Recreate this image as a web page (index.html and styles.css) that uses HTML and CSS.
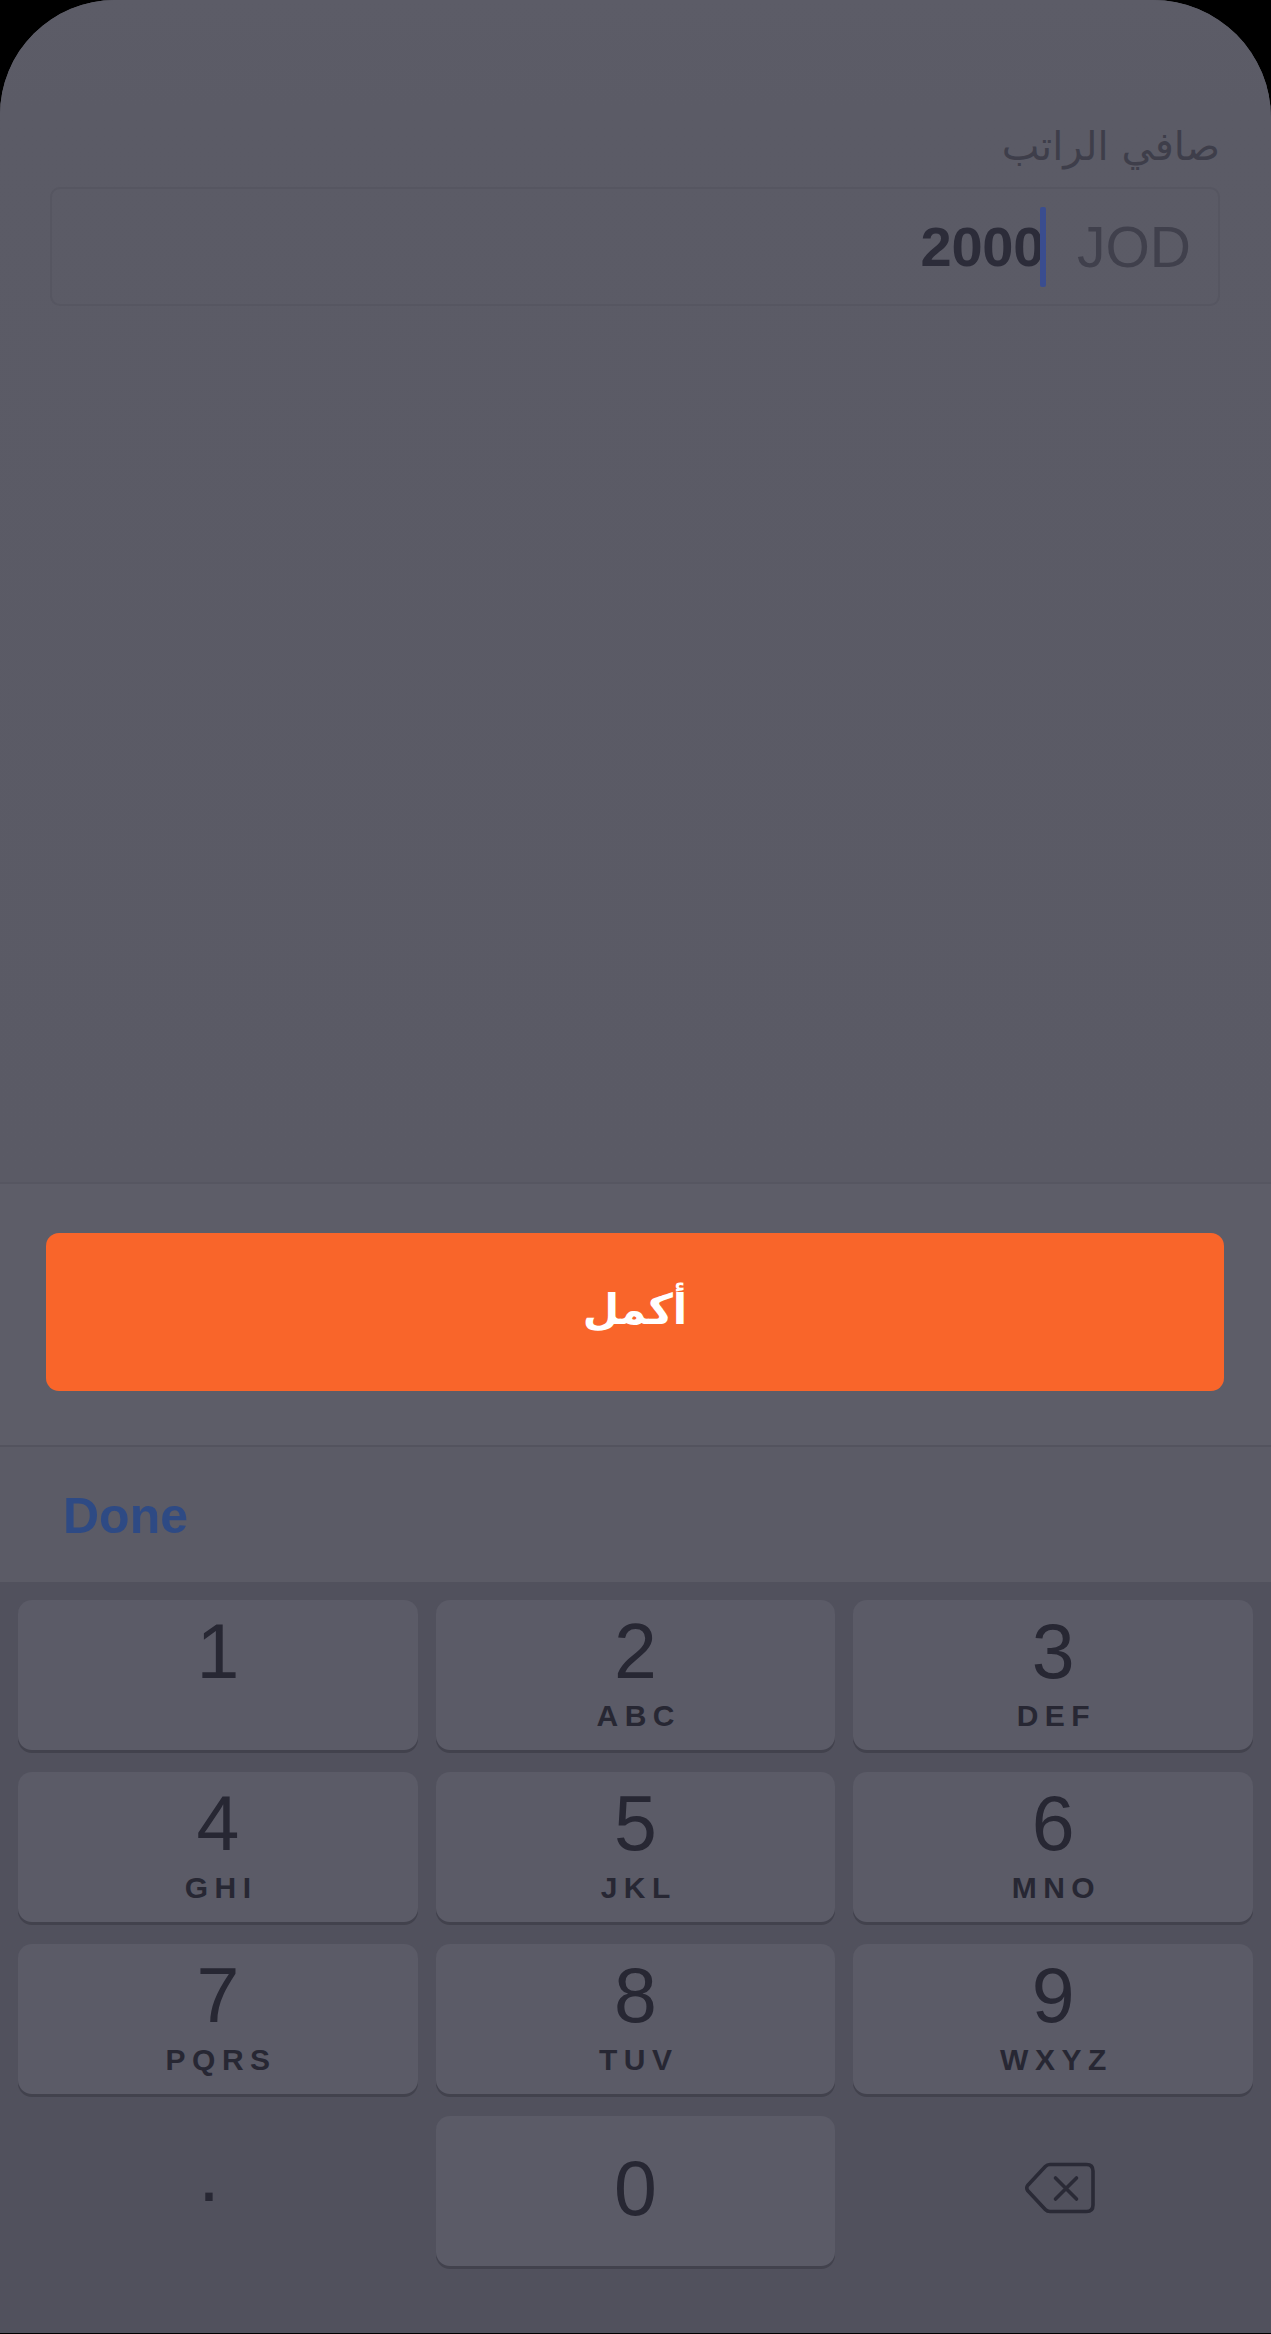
FILE: index.html
```html
<!DOCTYPE html>
<html lang="ar">
<head>
<meta charset="utf-8">
<title>صافي الراتب</title>
<link rel="stylesheet" href="styles.css">
</head>
<body>
<div class="screen">
  <div class="content">
    <div class="field-label" dir="rtl">صافي الراتب</div>
    <div class="amount-input">
      <span class="amount-value">2000</span>
      <span class="caret"></span>
      <span class="currency">JOD</span>
    </div>
  </div>
  <div class="footer-bar">
    <button class="primary-btn" dir="rtl">أكمل</button>
  </div>
  <div class="toolbar">
    <span class="done">Done</span>
  </div>
  <div class="keyboard">
    <div class="key"><span class="digit">1</span><span class="letters"></span></div>
    <div class="key"><span class="digit">2</span><span class="letters">ABC</span></div>
    <div class="key"><span class="digit">3</span><span class="letters">DEF</span></div>
    <div class="key"><span class="digit">4</span><span class="letters">GHI</span></div>
    <div class="key"><span class="digit">5</span><span class="letters">JKL</span></div>
    <div class="key"><span class="digit">6</span><span class="letters">MNO</span></div>
    <div class="key"><span class="digit">7</span><span class="letters">PQRS</span></div>
    <div class="key"><span class="digit">8</span><span class="letters">TUV</span></div>
    <div class="key"><span class="digit">9</span><span class="letters">WXYZ</span></div>
    <div class="key key-plain key-dot"><span class="digit">.</span></div>
    <div class="key key-zero"><span class="digit">0</span></div>
    <div class="key key-plain key-delete">
      <svg class="delete-icon" width="72" height="52" viewBox="0 0 72 52" fill="none" stroke="#2a2a36" stroke-width="3.6" stroke-linecap="round" stroke-linejoin="round">
        <path d="M26 2.5 H62.5 Q69 2.5 69 9 V43 Q69 49.5 62.5 49.5 H26 Q23.2 49.5 21.3 47.5 L3.6 28.6 Q2 26 3.6 23.4 L21.3 4.5 Q23.2 2.5 26 2.5 Z"/>
        <path d="M31.5 16 L52.5 37 M52.5 16 L31.5 37"/>
      </svg>
    </div>
  </div>
</div>
</body>
</html>
```
FILE: styles.css
```css
html, body {
  margin: 0;
  padding: 0;
  background: #000000;
}

.screen {
  width: 1271px;
  height: 2333px;
  background: #5b5b66;
  border-radius: 115px 118px 0 0;
  overflow: hidden;
  display: flex;
  flex-direction: column;
  font-family: "Liberation Sans", Arial, sans-serif;
}

.content {
  height: 1182px;
  box-sizing: border-box;
  padding: 124px 51px 0 50px;
  background: linear-gradient(#5c5c67 0, #5b5b66 110px, #5a5a65 1182px);
}

.field-label {
  font-family: "DejaVu Sans", sans-serif;
  font-size: 40px;
  line-height: 44px;
  color: #3e3e4a;
  text-align: right;
}

.amount-input {
  margin-top: 19px;
  height: 119px;
  box-sizing: border-box;
  border: 2px solid #565661;
  border-radius: 10px;
  display: flex;
  align-items: center;
  justify-content: flex-end;
  padding-right: 27px;
}

.amount-value {
  font-size: 56px;
  font-weight: 700;
  color: #2c2c39;
  letter-spacing: -0.3px;
}

.caret {
  width: 6px;
  height: 80px;
  background: #3a4d8f;
  border-radius: 2px;
  margin-left: -4px;
  margin-right: 31px;
}

.currency {
  font-size: 57px;
  color: #40404c;
}

.footer-bar {
  border-top: 2px solid #565661;
  padding: 49px 47px 54px 46px;
  background: #5d5d68;
}

.primary-btn {
  display: flex;
  align-items: center;
  justify-content: center;
  width: 100%;
  height: 158px;
  border: none;
  border-radius: 13px;
  background: #f9652a;
  color: #ffffff;
  font-family: "DejaVu Sans", sans-serif;
  font-size: 42px;
  font-weight: 700;
  padding: 0 0 6px 0;
}

.toolbar {
  border-top: 2px solid #53535e;
  height: 137px;
  box-sizing: border-box;
  padding: 44px 0 0 63px;
  background: #5b5b66;
}

.done {
  font-size: 50px;
  line-height: 50px;
  font-weight: 700;
  color: #2e4a84;
}

.keyboard {
  flex: 1;
  background: #51515d;
  padding: 18px 18px 0 18px;
  display: grid;
  grid-template-columns: repeat(3, 1fr);
  grid-auto-rows: 150px;
  column-gap: 18px;
  row-gap: 22px;
  align-content: start;
}

.key {
  background: #5b5b67;
  border-radius: 14px;
  box-shadow: 0 3px 0 #42424d;
  display: flex;
  flex-direction: column;
  align-items: center;
  padding-top: 13px;
  box-sizing: border-box;
  color: #272733;
}

.digit {
  font-size: 77px;
  line-height: 77px;
  font-weight: 400;
}

.letters {
  margin-top: 11px;
  font-size: 30px;
  line-height: 30px;
  font-weight: 700;
  letter-spacing: 6.5px;
  padding-left: 6.5px;
}

.key-plain {
  background: transparent;
  box-shadow: none;
}

.key-dot {
  padding-top: 20px;
  padding-right: 18px;
}

.key-zero {
  padding-top: 34px;
}

.key-delete {
  padding: 0 0 6px 14px;
  justify-content: center;
}

.delete-icon {
  display: block;
}
```
